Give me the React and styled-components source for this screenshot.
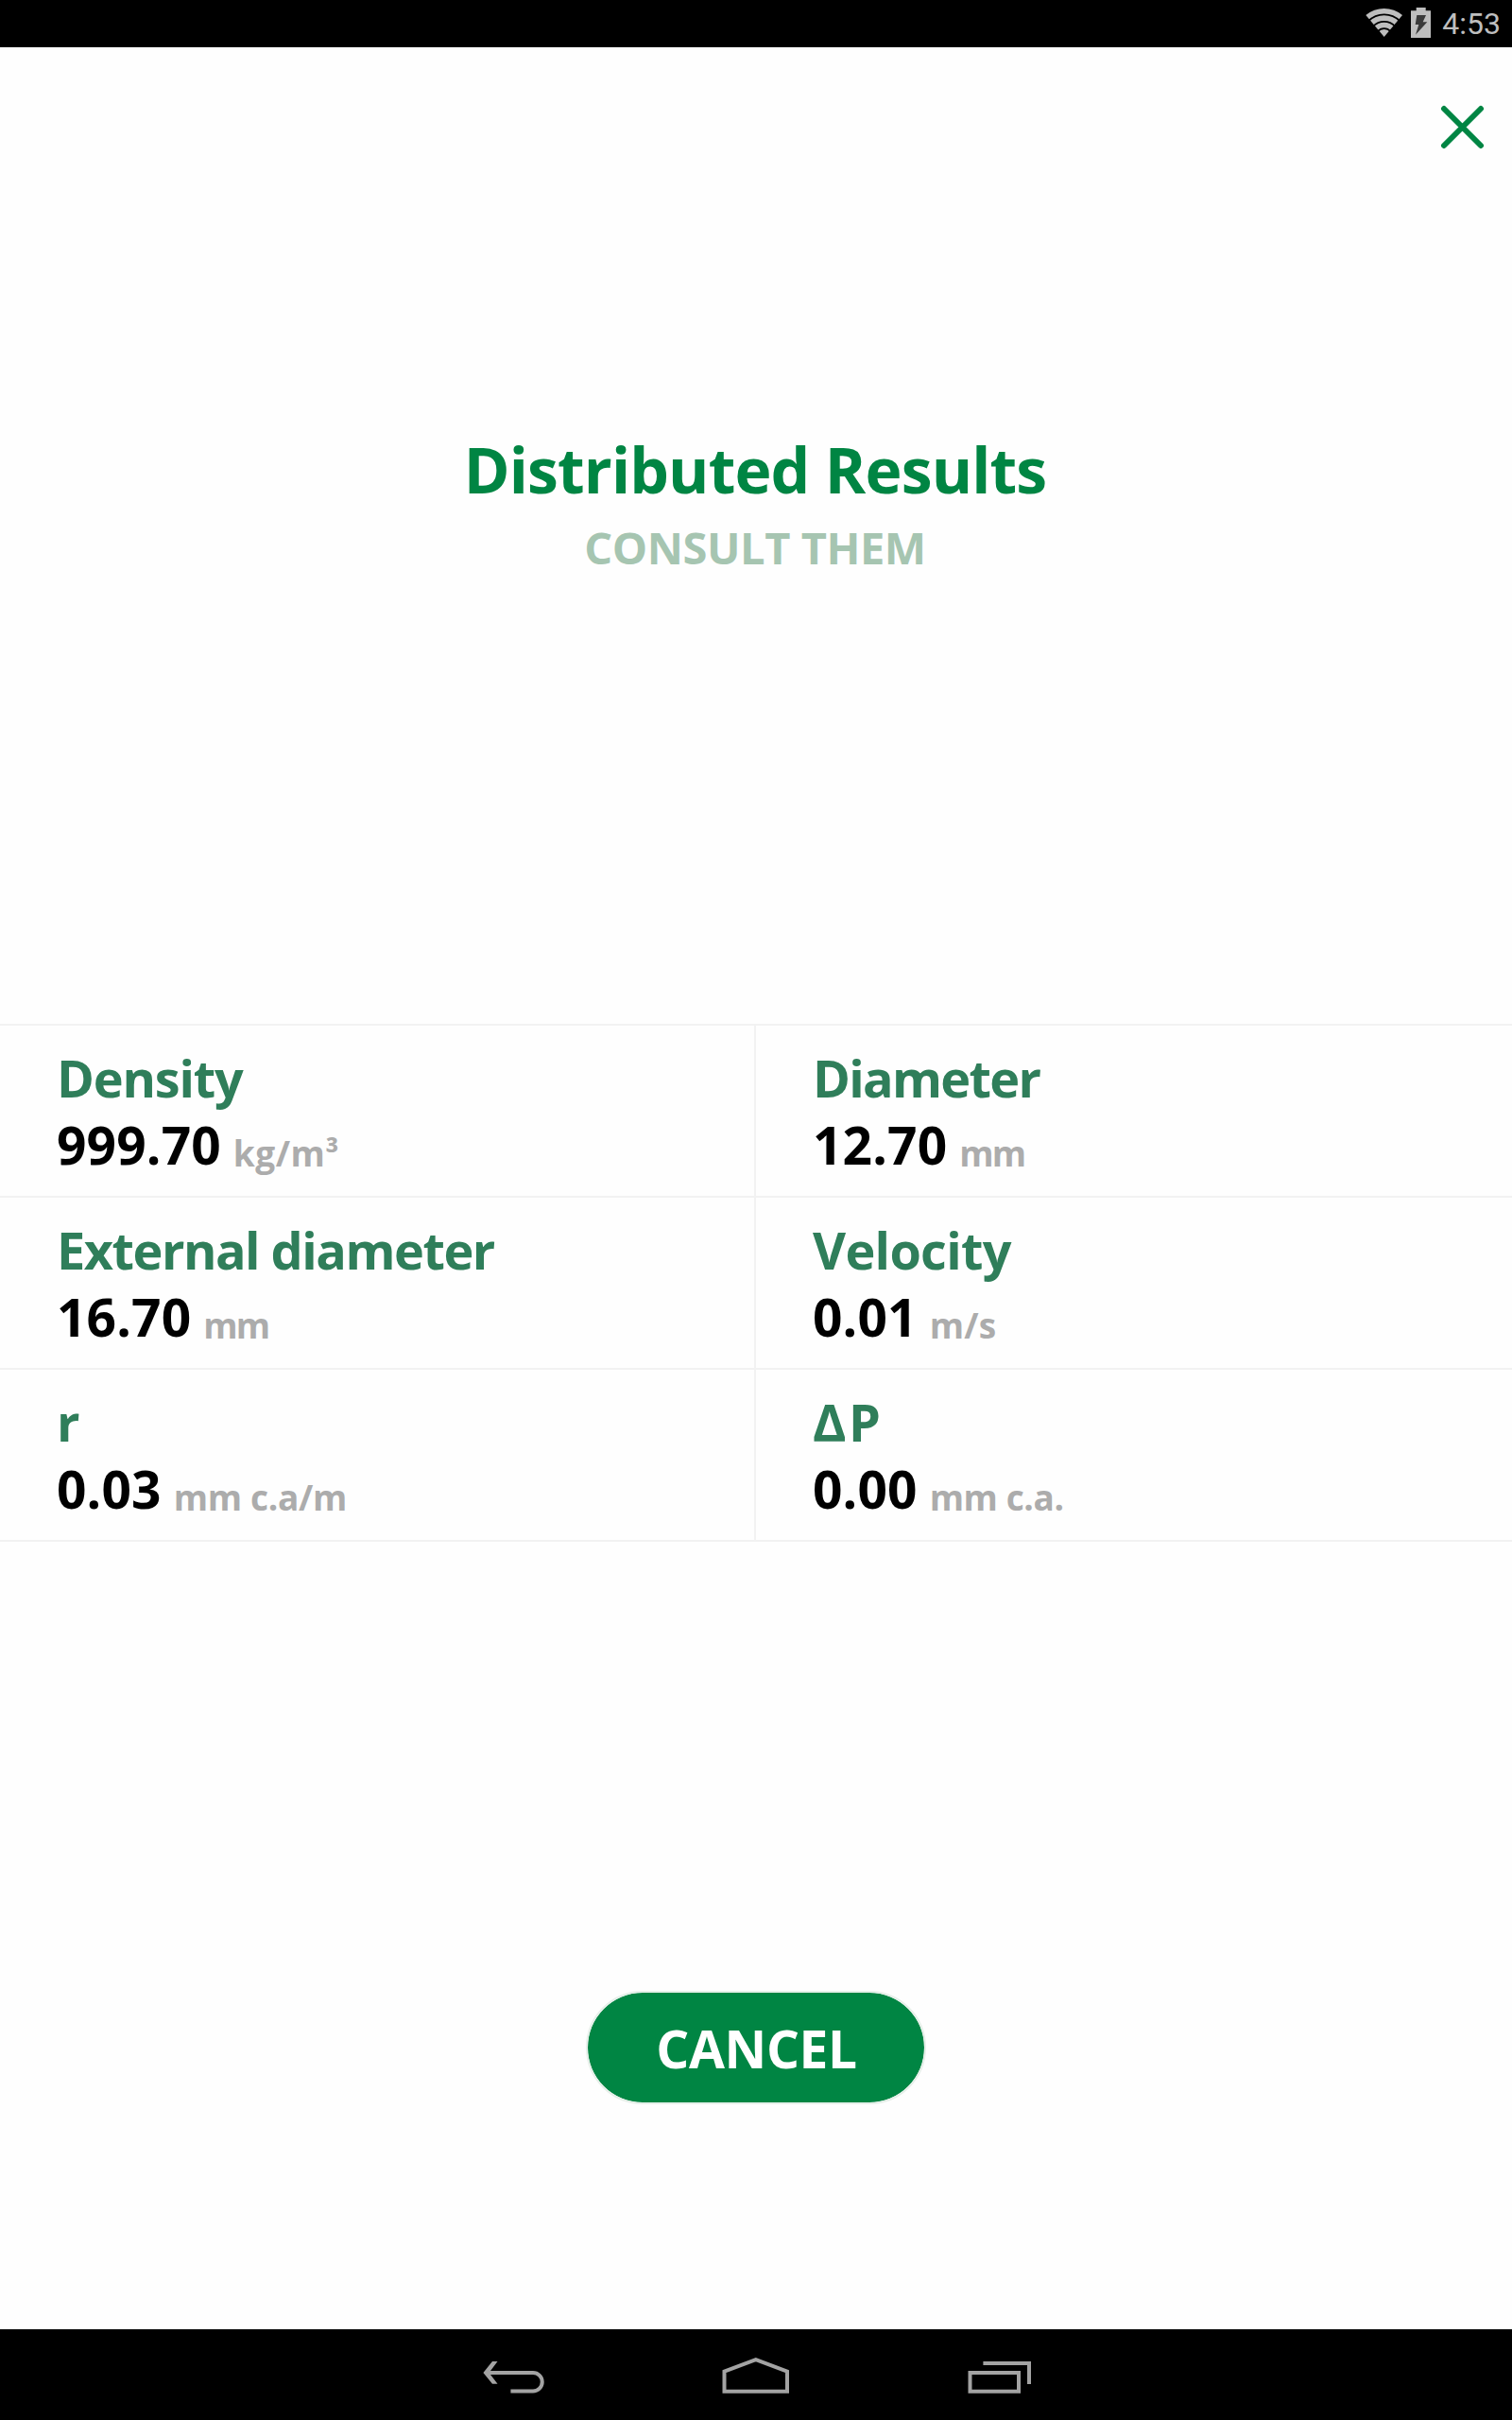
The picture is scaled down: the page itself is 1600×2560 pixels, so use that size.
import React from 'react';
import styled, { createGlobalStyle } from 'styled-components';

const GlobalStyle = createGlobalStyle`
    body {
        margin: 0;
        background: #fefefe;
        font-family: 'Open Sans', 'Noto Sans', sans-serif;
    }
`;

const Screen = styled.div`
    display: flex;
    flex-direction: column;
    width: 1600px;
    height: 2560px;
    background: #fefefe;
`;

const StatusBar = styled.div`
    display: flex;
    justify-content: flex-end;
    align-items: center;
    height: 50px;
    padding-right: 12px;
    box-sizing: border-box;
    background: #000;
`;

const Clock = styled.span`
    margin-left: 11px;
    font: 400 32px/52px Roboto, sans-serif;
    color: #bebebe;
`;

const TopBar = styled.div`
    display: flex;
    justify-content: flex-end;
    padding: 60px 28px 0 0;
`;

const CloseButton = styled.button`
    width: 49px;
    height: 49px;
    padding: 0;
    border: 0;
    background: none;
`;

const Header = styled.div`
    height: 789px;
    padding: 295px 2px 0 0;
    box-sizing: border-box;
    text-align: center;
    font-weight: 700;
`;

const Title = styled.h1`
    margin: 0 0 9px;
    font-size: 66px;
    line-height: 84px;
    letter-spacing: -0.84px;
    color: #008543;
`;

const Subtitle = styled.div`
    font-size: 47px;
    line-height: 64px;
    letter-spacing: -0.45px;
    color: #a6c5b1;
`;

const Results = styled.div`
    display: grid;
    grid-template-columns: 1fr 1fr;
    margin-top: 135px;
    border-top: 2px solid #f2f2f2;
`;

const Cell = styled.div`
    height: 182px;
    padding: 19px 0 0 60px;
    box-sizing: border-box;
    border-bottom: 2px solid #f2f2f2;
    font-weight: 700;
    white-space: nowrap;
    &:nth-child(odd) {
        border-right: 2px solid #f2f2f2;
    }
`;

const Label = styled.div`
    font-size: 54px;
    line-height: 72px;
    letter-spacing: ${props => props.$track}px;
    color: #2f7e5a;
`;

const Reading = styled.div`
    display: flex;
    gap: 13px;
`;

const Value = styled.span`
    font-size: 55px;
    line-height: 70px;
    letter-spacing: 0.15px;
    color: #000;
`;

const Unit = styled.span`
    font-size: 37px;
    line-height: 87px;
    letter-spacing: ${props => props.$track}px;
    color: #acacac;
`;

const Footer = styled.div`
    display: flex;
    flex: 1;
    justify-content: center;
    padding-top: 475px;
`;

const CancelButton = styled.button`
    width: 360px;
    height: 120px;
    padding: 0 0 0 1px;
    border: 2px solid #e6efe9;
    border-radius: 60px;
    background: #008543;
    background-clip: padding-box;
    font: 700 55px/118px 'Open Sans', sans-serif;
    letter-spacing: -0.37px;
    color: #fff;
`;

const NavBar = styled.div`
    display: flex;
    justify-content: center;
    height: 96px;
    background: #000;
`;

const NavIcon = styled.svg`
    width: 256px;
    height: 96px;
    fill: none;
    stroke: #a3a3a3;
    stroke-width: 4;
`;

const results = [
    { label: 'Density', value: '999.70', unit: 'kg/m³', track: -1.2, unitTrack: 0.55 },
    { label: 'Diameter', value: '12.70', unit: 'mm', track: -1.7, unitTrack: -1.8 },
    { label: 'External diameter', value: '16.70', unit: 'mm', track: -1.48, unitTrack: -1.8 },
    { label: 'Velocity', value: '0.01', unit: 'm/s', track: -0.7, unitTrack: 0.25 },
    { label: 'r', value: '0.03', unit: 'mm c.a/m', track: 0, unitTrack: -0.3 },
    { label: 'ΔP', value: '0.00', unit: 'mm c.a.', track: 2.5, unitTrack: -0.4 }
];

const StatusIcons = () => (
    <svg width='71' height='50' viewBox='1444 0 71 50'>
        <path d='M1445.3 16 A30 30 0 0 1 1484 16 L1464.7 39 Z' fill='#bebebe' />
        <g fill='none' stroke='#000' strokeWidth='1.8'>
            <path d='M1448 22.4 A23.5 23.5 0 0 1 1481.4 22.4' />
            <path d='M1453 28 A16 16 0 0 1 1476.4 28' />
            <path d='M1458 33.2 A8.8 8.8 0 0 1 1471.4 33.2' />
        </g>
        <path d='M1493 11.3 H1498.7 V8 H1508.7 V11.3 H1514 V40 H1493 Z' fill='#bebebe' />
        <path d='M1499.3 16 H1509 L1505.7 23.3 H1510.3 L1498 36.7 L1501.3 26 H1497.7 Z' fill='#3a3a3a' />
    </svg>
);

const App = () => {
    return (
        <Screen>
            <GlobalStyle />
            <StatusBar>
                <StatusIcons />
                <Clock>4:53</Clock>
            </StatusBar>
            <TopBar>
                <CloseButton aria-label='Close'>
                    <svg width='49' height='49' viewBox='0 0 49 49'>
                        <path
                            d='M5 5 L44 44 M44 5 L5 44'
                            stroke='#008543'
                            strokeWidth='6'
                            strokeLinecap='round'
                        />
                    </svg>
                </CloseButton>
            </TopBar>
            <Header>
                <Title>Distributed Results</Title>
                <Subtitle>CONSULT THEM</Subtitle>
            </Header>
            <Results>
                {results.map(item => (
                    <Cell key={item.label}>
                        <Label $track={item.track}>{item.label}</Label>
                        <Reading>
                            <Value>{item.value}</Value>
                            <Unit $track={item.unitTrack}>{item.unit}</Unit>
                        </Reading>
                    </Cell>
                ))}
            </Results>
            <Footer>
                <CancelButton>CANCEL</CancelButton>
            </Footer>
            <NavBar>
                <NavIcon viewBox='0 0 256 96'>
                    <path d='M99 46 H148 A9.75 9.75 0 0 1 148 65.5 H124.4' />
                    <path
                        d='M95.4 46 L105 34 H110.5 L101.5 46 L110.5 57.7 H105 Z'
                        fill='#a3a3a3'
                        stroke='none'
                    />
                </NavIcon>
                <NavIcon viewBox='0 0 256 96'>
                    <path d='M94.5 44.6 L127.8 32.2 L161 44.6 V65.7 H94.5 Z' />
                </NavIcon>
                <NavIcon viewBox='0 0 256 96'>
                    <path d='M98.5 46 H150 V65.7 H98.5 Z' />
                    <path d='M112.4 36 H161 V58' />
                </NavIcon>
            </NavBar>
        </Screen>
    );
};

export default App;
